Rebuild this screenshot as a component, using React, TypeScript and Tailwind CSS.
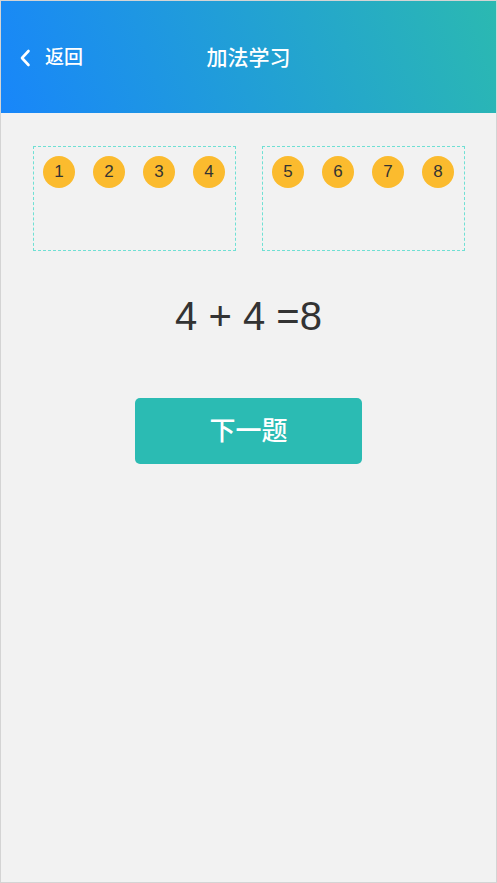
import React from 'react';

const Ball: React.FC<{ n: number }> = ({ n }) => (
  <div className="w-8 h-8 rounded-full bg-[#fbbb2e] flex items-center justify-center text-[17px] text-[#333]">
    {n}
  </div>
);

const Group: React.FC<{ nums: number[] }> = ({ nums }) => (
  <div className="w-[203px] h-[105px] border border-dashed border-[#6fe0d4] px-[9px] pt-[9px] flex gap-[18px] items-start">
    {nums.map((n) => (
      <Ball key={n} n={n} />
    ))}
  </div>
);

const App: React.FC = () => {
  return (
    <div
      className="w-[497px] h-[883px] bg-[#f2f2f2] border border-[#d4d4d4] flex flex-col overflow-hidden"
      style={{ fontFamily: '"Liberation Sans", "Noto Sans CJK SC", sans-serif' }}
    >
      {/* header */}
      <header className="h-[112px] shrink-0 bg-linear-[70deg] from-[#1886fa] to-[#2bb9b1] relative flex items-center px-[18px] pt-[2px] text-white">
        <button className="flex items-center gap-[14px] text-[19px] font-medium">
          <svg width="12" height="18" viewBox="0 0 12 18" fill="none">
            <path d="M9.5 2 L3 9 L9.5 16" stroke="white" strokeWidth="2.6" strokeLinecap="round" strokeLinejoin="round" />
          </svg>
          <span>返回</span>
        </button>
        <h1 className="absolute left-0 right-0 text-center text-[21px] font-medium pointer-events-none">加法学习</h1>
      </header>

      <main className="flex flex-col items-center">
        <div className="flex gap-[26px] mt-[33px] ml-[1px]">
          <Group nums={[1, 2, 3, 4]} />
          <Group nums={[5, 6, 7, 8]} />
        </div>

        <div className="mt-[45px] text-[40px] text-[#333] leading-none">4 + 4 =8</div>

        <button className="mt-[62px] w-[227px] h-[66px] rounded-[5px] bg-[#2bbbb3] text-white text-[26px] font-medium">
          下一题
        </button>
      </main>
    </div>
  );
};

export default App;
